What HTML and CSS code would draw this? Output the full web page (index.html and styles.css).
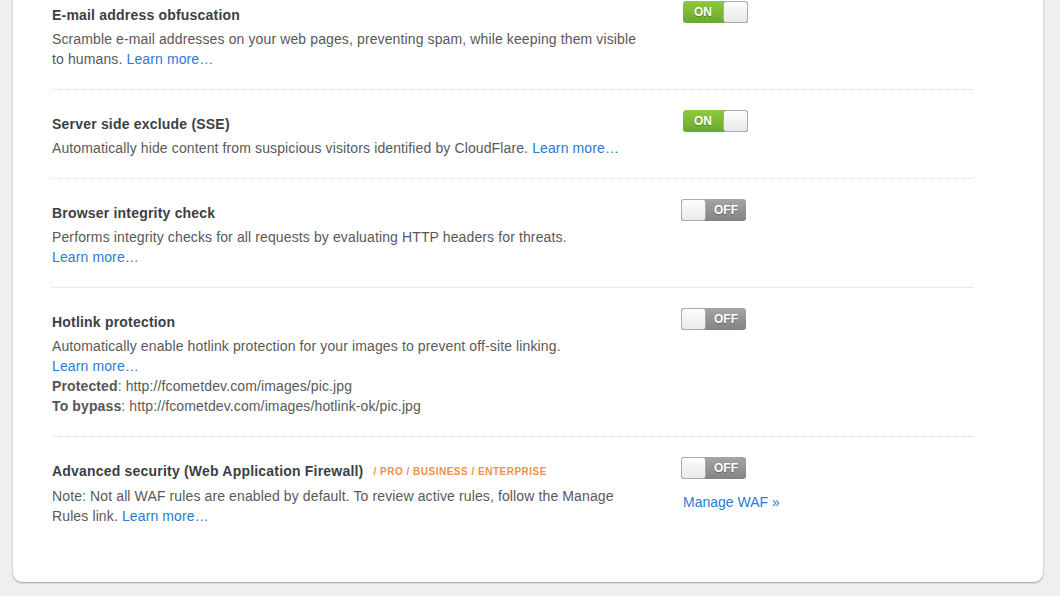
FILE: index.html
```html
<!DOCTYPE html>
<html lang="en">
<head>
    <meta charset="UTF-8">
    <title>Security settings</title>
    <link rel="stylesheet" href="styles.css">
</head>
<body>
    <div class="settings-card">
        <div class="setting-row">
            <div class="setting-info">
                <h3>E-mail address obfuscation</h3>
                <p>Scramble e-mail addresses on your web pages, preventing spam, while keeping them visible to humans. <a href="#">Learn more…</a></p>
            </div>
            <div class="setting-control">
                <span class="switch on"><span class="switch-label">ON</span><span class="switch-knob"></span></span>
            </div>
        </div>
        <div class="setting-row">
            <div class="setting-info">
                <h3>Server side exclude (SSE)</h3>
                <p>Automatically hide content from suspicious visitors identified by CloudFlare. <a href="#">Learn more…</a></p>
            </div>
            <div class="setting-control">
                <span class="switch on"><span class="switch-label">ON</span><span class="switch-knob"></span></span>
            </div>
        </div>
        <div class="setting-row">
            <div class="setting-info">
                <h3>Browser integrity check</h3>
                <p>Performs integrity checks for all requests by evaluating HTTP headers for threats. <a href="#">Learn more…</a></p>
            </div>
            <div class="setting-control">
                <span class="switch off"><span class="switch-knob"></span><span class="switch-label">OFF</span></span>
            </div>
        </div>
        <div class="setting-row">
            <div class="setting-info">
                <h3>Hotlink protection</h3>
                <p>Automatically enable hotlink protection for your images to prevent off-site linking.<br>
                <a href="#">Learn more…</a><br>
                <b>Protected</b>: http://fcometdev.com/images/pic.jpg<br>
                <b>To bypass</b>: http://fcometdev.com/images/hotlink-ok/pic.jpg</p>
            </div>
            <div class="setting-control">
                <span class="switch off"><span class="switch-knob"></span><span class="switch-label">OFF</span></span>
            </div>
        </div>
        <div class="setting-row">
            <div class="setting-info">
                <h3>Advanced security (Web Application Firewall) <span class="plan-tag">/ Pro / Business / Enterprise</span></h3>
                <p>Note: Not all WAF rules are enabled by default. To review active rules, follow the Manage Rules link. <a href="#">Learn more…</a></p>
            </div>
            <div class="setting-control">
                <span class="switch off"><span class="switch-knob"></span><span class="switch-label">OFF</span></span>
                <a href="#" class="manage-link">Manage WAF »</a>
            </div>
        </div>
    </div>
</body>
</html>
```

FILE: styles.css
```css
body {
    font-family: "Liberation Sans", Arial, sans-serif;
    background-color: #efefef;
    margin: 0;
    padding: 0 0 14px;
    overflow: hidden;
}
.settings-card {
    background: #fff;
    width: 1030px;
    box-sizing: border-box;
    margin: -40px 0 0 13px;
    padding: 20px 70px 36px 39px;
    border-radius: 0 0 9px 9px;
    box-shadow: 0 1px 2px rgba(0, 0, 0, 0.35);
}
.setting-row {
    display: grid;
    grid-template-columns: 590px 1fr;
    column-gap: 39px;
    padding: 24px 0 20px;
    border-top: 1px dotted #d9d9d9;
}
.setting-row:first-child {
    border-top: none;
    padding-top: 25px;
}
.setting-info h3 {
    margin: 0 0 4px;
    font-size: 14px;
    line-height: 20px;
    letter-spacing: 0.2px;
    color: #3b3f45;
}
.setting-info p {
    margin: 0;
    font-size: 14px;
    line-height: 20px;
    letter-spacing: 0.12px;
    color: #595959;
}
.setting-info p b {
    color: #555;
}
.setting-info a,
.manage-link {
    color: #2a7bd6;
    text-decoration: none;
    white-space: nowrap;
}
.plan-tag {
    margin-left: 6px;
    font-size: 10px;
    letter-spacing: 0.5px;
    text-transform: uppercase;
    color: #f3904a;
    vertical-align: 1px;
}
.setting-control {
    display: flex;
    flex-direction: column;
    align-items: flex-start;
    margin-top: -4px;
}
.switch {
    display: flex;
    width: 65px;
    height: 22px;
    border-radius: 3px;
    overflow: hidden;
}
.switch.on {
    margin-left: 2px;
    background: linear-gradient(#8fc93f, #68a92b);
}
.switch.off {
    background: linear-gradient(#a5a5a5, #838383);
}
.switch-label {
    flex: 1;
    text-align: center;
    color: #fff;
    font-size: 12px;
    font-weight: bold;
    line-height: 22px;
    text-shadow: 0 1px 1px rgba(0, 0, 0, 0.3);
}
.switch-knob {
    width: 25px;
    box-sizing: border-box;
    background: linear-gradient(#fdfdfd, #e9e9e9);
    border: 1px solid #acacac;
    border-radius: 3px;
}
.manage-link {
    margin-top: 13px;
    margin-left: 2px;
    font-size: 14px;
    line-height: 20px;
}
```
